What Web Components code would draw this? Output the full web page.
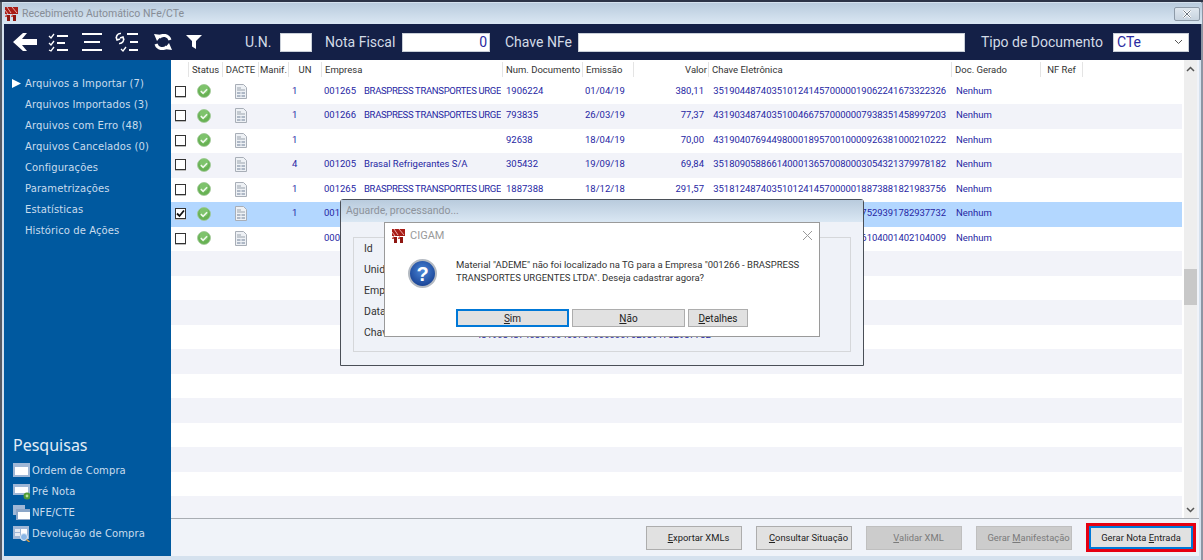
<!DOCTYPE html>
<html lang="pt-BR">
<head>
<meta charset="utf-8">
<title>Recebimento Automático NFe/CTe</title>
<style>
  html, body { margin: 0; height: 100%; overflow: hidden; background: #dfe7f0; }
  body { font-family: Roboto, "Liberation Sans", sans-serif; }
</style>
</head>
<body>
<app-window>
  <title-bar slot="title">Recebimento Automático NFe/CTe</title-bar>
  <tool-bar slot="tools"></tool-bar>
  <side-nav slot="side"></side-nav>
  <doc-grid slot="main"></doc-grid>
  <action-bar slot="actions"></action-bar>
  <wait-dialog slot="over"></wait-dialog>
  <message-box slot="over"></message-box>
</app-window>

<script>
const logo = `<svg width="13" height="14" viewBox="0 0 13 14" style="flex:none">
  <path fill="#a81c16" d="M0 0h13v7H0z"/>
  <path stroke="#e9aca8" stroke-width="1" d="M2 0l4 6M7 0l5 6M0 3l3 4"/>
  <path fill="#8f1712" d="M2 8h3v6H2zM8 8h3v6H8z"/>
  <path fill="#c9524c" d="M0 9l2-2v3H0zM6 9l2-2v3H6z"/>
</svg>`

class AppWindow extends HTMLElement {
  connectedCallback() {
    this.attachShadow({ mode: "open" }).innerHTML = `
      <style>
        :host { display: block; position: relative; width: 1203px; height: 560px; box-sizing: border-box;
          padding: 1px 4px 4px 4px; border-top: 2px solid #2c3346;
          background: #d5e1ee; box-shadow: inset 2px 0 0 #555b66, inset -2px 0 0 #8d95a3; }
        .frame { display: flex; flex-direction: column; height: 100%; }
        .body { flex: 1; display: flex; min-height: 0; background: #f0f3f9; }
        .main { flex: 1; min-width: 0; display: flex; flex-direction: column; }
        ::slotted([slot="main"]) { flex: 1; min-height: 0; }
      </style>
      <div class="frame">
        <slot name="title"></slot>
        <slot name="tools"></slot>
        <div class="body">
          <slot name="side"></slot>
          <div class="main"><slot name="main"></slot><slot name="actions"></slot></div>
        </div>
      </div>
      <slot name="over"></slot>`
  }
}

class TitleBar extends HTMLElement {
  connectedCallback() {
    this.attachShadow({ mode: "open" }).innerHTML = `
      <style>
        :host { display: flex; align-items: center; height: 21px; gap: 4px; padding: 0 2px 0 2px; margin: 0 -3px 0 -1px;
          background: linear-gradient(#b9cbdd, #dae7f3); color: #878d96; font-size: 10.500px; }
        .title { flex: 1; }
        .close { width: 26px; height: 14px; box-sizing: border-box; border: 1px solid #8d9aa8; border-radius: 2px;
          background: linear-gradient(#dfe7ef, #c7d3df); display: flex; align-items: center; justify-content: center; }
      </style>
      ${logo}
      <span class="title"><slot></slot></span>
      <span class="close"><svg width="10" height="8" viewBox="0 0 10 8"><path d="M1.500 .5l7 7M8.500 .5l-7 7" stroke="#fff" stroke-width="2.400"/><path d="M1.500 .5l7 7M8.500 .5l-7 7" stroke="#6d7782" stroke-width="1"/></svg></span>`
  }
}

class ToolBar extends HTMLElement {
  connectedCallback() {
    this.attachShadow({ mode: "open" }).innerHTML = `
      <style>
        :host { display: flex; align-items: center; height: 36px; background: #142047; color: #d3dbe6;
          font-size: 14px; margin: 0 -2px 0 0; }
        svg { display: block; flex: none; }
        label { flex: none; white-space: nowrap; }
        .field { flex: none; box-sizing: border-box; height: 19px; background: #fff; color: #2a2aa0; border: 1px solid #c9cfd8;
          display: flex; align-items: center; justify-content: flex-end; padding: 0 2px; font-size: 14px; }
        .select { justify-content: space-between; padding: 0 5px 0 3px; }
      </style>
      <svg style="margin-left:9px" width="24" height="20" viewBox="0 0 24 20"><path fill="#fff" d="M0 10l10-9h4l-5 6h15v6H9l5 6h-4z"/></svg>
      <svg style="margin-left:11px" width="20" height="20" viewBox="0 0 20 20" fill="none" stroke="#fff"><path stroke-width="1.300" d="M1 4l2 2 3-4M1 11l2 2 3-4M1 18l2 1 3-4"/><path stroke-width="1.800" d="M9 4h11M9 11h8M9 18h11"/></svg>
      <svg style="margin-left:14px" width="20" height="20" viewBox="0 0 20 20" stroke="#fff" stroke-width="2"><path d="M0 2h20M2 10h16M0 18h20"/></svg>
      <svg style="margin-left:13px" width="23" height="20" viewBox="0 0 23 20" fill="none" stroke="#fff"><path stroke-width="1.500" d="M6 1.500a4 4 0 0 0-4 6M4 11.500a4 4 0 0 0 4-6M1 5l1 3 3-1M9 8L8 5 5 6"/><path stroke-width="1.300" d="M6 17l2 2 3-4"/><path stroke-width="1.800" d="M12 2h11M15 10h8M14 18h9"/></svg>
      <svg style="margin-left:16px" width="18" height="16" viewBox="0 0 18 16" fill="none"><path stroke="#fff" stroke-width="3" d="M16 6A6.500 6.500 0 0 0 5 3.500M2 10a6.500 6.500 0 0 0 11 2.500"/><path fill="#fff" d="M0 0l8 1-5 6zM18 16l-8-1 5-6z"/></svg>
      <svg style="margin-left:14px" width="16" height="14" viewBox="0 0 16 14"><path fill="#fff" d="M0 0h16L10 6v8l-4-2.500V6z"/></svg>
      <label style="margin-left:43px;width:25px">U.N.</label>
      <span class="field" style="margin-left:10px;width:32px"></span>
      <label style="margin-left:13px;width:71px">Nota Fiscal</label>
      <span class="field" style="margin-left:6px;width:88px">0</span>
      <label style="margin-left:15px;width:66px">Chave NFe</label>
      <span class="field" style="margin-left:7px;width:387px"></span>
      <label style="margin-left:16px;width:121px">Tipo de Documento</label>
      <span class="field select" style="margin-left:11px;width:76px">CTe<svg width="9" height="6" viewBox="0 0 9 6" fill="none" stroke="#555"><path d="M1 1l3.500 3.500L8 1"/></svg></span>`
  }
}

class NavLink extends HTMLElement {
  connectedCallback() {
    this.attachShadow({ mode: "open" }).innerHTML = `
      <style>
        :host { display: flex; align-items: center; height: 21px; padding-left: 8px; color: #c9dced;
          font-family: "DejaVu Sans", sans-serif; font-size: 10px; letter-spacing: .1px; }
        .mark { width: 13px; flex: none; }
        .mark svg { display: block; }
      </style>
      <span class="mark">${this.hasAttribute("active") ? '<svg width="9" height="9" viewBox="0 0 9 9"><path fill="#fff" d="M0 0l9 4.500L0 9z"/></svg>' : ""}</span>
      <slot></slot>`
  }
}

const searchIcons = {
  order: `<path fill="#9fb7d6" d="M0 0h17v14H0z"/><path fill="#fff" d="M2 4h13v8H2z"/>`,
  pre: `<path fill="#9fb7d6" d="M0 0h17v11H0z"/><path fill="#fff" d="M2 3h13v6H2z"/><circle cx="14" cy="12" r="3.500" fill="#4f9a35"/><circle cx="14" cy="12" r="1.400" fill="#b9e39a"/>`,
  nfe: `<path fill="#9fb7d6" d="M0 0h12v10H0z"/><path fill="#8ba6c8" d="M3 4h14v11H3z"/><path fill="#fff" d="M5 7h12v7H5z"/>`,
  dev: `<path fill="#9fb7d6" d="M0 0h16v13H0z"/><path fill="#e6ebf2" d="M2 3h5v3H2zM2 7h5v3H2z"/><path fill="#fff" d="M8 3h6v8H8z"/><circle cx="11" cy="11" r="3.500" fill="#8bb7e6" stroke="#dfe9f5"/><path stroke="#d89a3c" stroke-width="1.500" d="M13.500 13.500l3 2.500"/>`
}

class SearchLink extends HTMLElement {
  connectedCallback() {
    this.attachShadow({ mode: "open" }).innerHTML = `
      <style>
        :host { display: flex; align-items: center; gap: 2px; height: 21px; padding-left: 9px; color: #c9dced;
          font-family: "DejaVu Sans", sans-serif; font-size: 10px; letter-spacing: .1px; }
        svg { flex: none; }
      </style>
      <svg width="17" height="16" viewBox="0 0 17 16">${searchIcons[this.getAttribute("icon")]}</svg>
      <slot></slot>`
  }
}

class SideNav extends HTMLElement {
  connectedCallback() {
    const links = ["Arquivos a Importar (7)", "Arquivos Importados (3)", "Arquivos com Erro (48)", "Arquivos Cancelados (0)",
      "Configurações", "Parametrizações", "Estatísticas", "Histórico de Ações"]
    const searches = [["order", "Ordem de Compra"], ["pre", "Pré Nota"], ["nfe", "NFE/CTE"], ["dev", "Devolução de Compra"]]
    this.attachShadow({ mode: "open" }).innerHTML = `
      <style>
        :host { display: flex; flex-direction: column; flex: none; width: 167px; background: #00599f; box-sizing: border-box; padding: 13px 0 12px; }
        .links { flex: 1; }
        h2 { margin: 0 0 4px 9px; font: 400 16px "Noto Sans", sans-serif; color: #e4edf6; }
      </style>
      <div class="links">${links.map((l, i) => `<nav-link ${i == 0 ? "active" : ""}>${l}</nav-link>`).join("")}</div>
      <h2>Pesquisas</h2>
      ${searches.map(([icon, label]) => `<search-link icon="${icon}">${label}</search-link>`).join("")}`
  }
}

const columns = "18px 34px 36px 30px 33px 181px 80px 51px 75px 243px 89px 42px 98px"

const statusIcon = `<svg width="14" height="14" viewBox="0 0 14 14"><circle cx="7" cy="7" r="6.500" fill="#68b254" stroke="#a3c99b" stroke-width=".8"/><circle cx="7" cy="5" r="4.500" fill="#94d383" opacity=".5"/><path d="M3.800 7.200l2.300 2.200 4-4.200" fill="none" stroke="#eef8ea" stroke-width="1.600"/></svg>`
const docIcon = `<svg width="12" height="15" viewBox="0 0 12 15"><path fill="#eef1f5" stroke="#a8aeb7" d="M.5.5h8l3 3v11H.5z"/><path stroke="#9aa3ad" d="M2 4h4M2 6h8"/><path fill="#aeb8c6" d="M2 8h8v5H2z"/><path stroke="#eef1f5" d="M2 10.500h8M6 8v5"/></svg>`

class CheckBox extends HTMLElement {
  connectedCallback() {
    this.attachShadow({ mode: "open" }).innerHTML = `
      <style>
        :host { display: block; width: 11px; height: 11px; box-sizing: border-box; border: 1px solid #333; background: #fff; box-shadow: 0 1px 0 #bbb; }
        svg { display: block; }
      </style>
      ${this.hasAttribute("checked") ? '<svg width="9" height="9" viewBox="0 0 9 9"><path d="M1 4.500l2.500 2.500L8 1.500" fill="none" stroke="#111" stroke-width="1.800"/></svg>' : ""}`
  }
}

class GridRow extends HTMLElement {
  connectedCallback() {
    const d = JSON.parse(this.getAttribute("data") || "null")
    const caps = d && d.name && d.name == d.name.toUpperCase()
    const cells = !d ? "" : `
      <span class="c"><check-box ${d.checked ? "checked" : ""}></check-box></span>
      <span class="c st">${statusIcon}</span>
      <span class="c">${docIcon}</span>
      <span></span>
      <span class="un">${d.un || ""}</span>
      <span class="emp"><span class="code">${d.code || ""}</span><span class="name ${caps ? "caps" : ""}">${d.name || ""}</span></span>
      <span class="num">${d.num || ""}</span>
      <span class="dt">${d.date || ""}</span>
      <span class="val">${d.value || ""}</span>
      <span class="key">${d.key || ""}</span>
      <span class="gen">Nenhum</span>`
    this.attachShadow({ mode: "open" }).innerHTML = `
      <style>
        :host { display: grid; grid-template-columns: ${columns}; align-items: center; height: 24.5px; flex: none; box-sizing: border-box;
          padding-bottom: 3px; background: #fff; color: #2626a3; font-size: 9.500px; white-space: nowrap; }
        :host([shade]) { background: #f2f3f9; }
        :host([selected]) { background: #b3d7ff; }
        .c { display: flex; justify-content: center; padding-top: 2px; }
        .c:first-child { justify-content: flex-start; padding: 0 0 0 5px; margin-top: -2px; }
        .st { margin-left: -5px; }
        .un { padding-left: 3px; }
        .emp { display: flex; overflow: hidden; padding-left: 2px; }
        .code { width: 40px; flex: none; }
        .name { overflow: hidden; }
        .caps { letter-spacing: -.32px; }
        .num { padding-left: 3px; }
        .dt { padding-left: 2px; }
        .val { text-align: right; padding-right: 5px; }
        .key { text-align: right; padding-right: 6px; letter-spacing: -.05px; }
        .gen { padding-left: 4px; }
      </style>${cells}`
  }
}

class DocGrid extends HTMLElement {
  connectedCallback() {
    const heads = [["", ""], ["Status", "c"], ["DACTE", "c"], ["Manif.", "c"], ["UN", "c"], ["Empresa", ""], ["Num. Documento", ""], ["Emissão", ""], ["Valor", "r"], ["Chave Eletrônica", ""], ["Doc. Gerado", ""], ["NF Ref", "c"]]
    const cut = "BRASPRESS TRANSPORTES URGE"
    const rows = [
      { code: "001265", un: 1, name: cut, num: "1906224", date: "01/04/19", value: "380,11", key: "35190448740351012414570000019062241673322326" },
      { code: "001266", un: 1, name: cut, num: "793835", date: "26/03/19", value: "77,37", key: "43190348740351004667570000007938351458997203" },
      { un: 1, num: "92638", date: "18/04/19", value: "70,00", key: "43190407694498000189570010000926381000210222" },
      { code: "001205", un: 4, name: "Brasal Refrigerantes S/A", num: "305432", date: "19/09/18", value: "69,84", key: "35180905886614000136570080003054321379978182" },
      { code: "001265", un: 1, name: cut, num: "1887388", date: "18/12/18", value: "291,57", key: "35181248740351012414570000018873881821983756" },
      { code: "001", un: 1, checked: true, key: "7529391782937732" },
      { code: "000", key: "6104001402104009" }
    ]
    let rowsHtml = ""
    for (let i = 0; i < 18; i++) {
      const flags = (i == 5 ? "selected " : "") + (i % 2 ? "shade" : "")
      rowsHtml += `<grid-row ${flags} ${rows[i] ? `data='${JSON.stringify(rows[i])}'` : ""}></grid-row>`
    }
    this.attachShadow({ mode: "open" }).innerHTML = `
      <style>
        :host { display: flex; background: #fff; overflow: hidden; }
        .table { flex: 1; min-width: 0; display: flex; flex-direction: column; padding-right: 2px; }
        .head { display: grid; grid-template-columns: ${columns}; height: 19.500px; flex: none; align-items: center;
          color: #333; font-size: 9.500px; white-space: nowrap; }
        .head span { height: 15px; line-height: 15px; padding-left: 3px; box-sizing: border-box; border-right: 1px solid #e4e4e4; overflow: hidden; }
        .head .c { text-align: center; padding: 0; }
        .head .r { text-align: right; padding-right: 1px; }
        .bar { width: 13px; flex: none; background: #eeeeee; display: flex; flex-direction: column; align-items: center; padding: 6px 0 5px; box-sizing: border-box; }
        .bar svg { display: block; }
        .track { flex: 1; width: 100%; padding-top: 197px; box-sizing: border-box; }
        .thumb { height: 36px; background: #c8c8c8; }
        .edge { width: 2px; flex: none; background: #f0f3f9; }
      </style>
      <div class="table">
        <div class="head">${heads.map(([t, k]) => `<span class="${k}">${t}</span>`).join("")}</div>
        ${rowsHtml}
      </div>
      <div class="bar">
        <svg width="9" height="6" viewBox="0 0 9 6" fill="none" stroke="#555" stroke-width="1.500"><path d="M1 5l3.500-3.500L8 5"/></svg>
        <div class="track"><div class="thumb"></div></div>
        <svg width="9" height="6" viewBox="0 0 9 6" fill="none" stroke="#555" stroke-width="1.500"><path d="M1 1l3.500 3.500L8 1"/></svg>
      </div>
      <div class="edge"></div>`
  }
}

class UiButton extends HTMLElement {
  connectedCallback() {
    this.attachShadow({ mode: "open" }).innerHTML = `
      <style>
        :host { display: flex; align-items: center; justify-content: center; box-sizing: border-box; flex: none; height: 24px; width: 96px;
          background: #e1e1e1; border: 1px solid #adadad; color: #222; font-size: inherit; white-space: nowrap; }
        :host([disabled]) { background: #cccccc; border-color: #bfbfbf; color: #7a7a7a; }
        :host([focused]) { border: 2px solid #0078d7; }
      </style><span><slot></slot></span>`
  }
}

class ActionBar extends HTMLElement {
  connectedCallback() {
    this.attachShadow({ mode: "open" }).innerHTML = `
      <style>
        :host { display: flex; align-items: center; justify-content: flex-end; flex: none; height: 38px; gap: 14px; box-sizing: border-box;
          border-top: 1px solid #a9adb3; background: #f0f3f9; padding: 0 3px 0 0; font-size: 9.400px; }
        .mark { border: 3px solid #e60012; flex: none; }
        u { text-decoration: underline; }
        .pad { padding-left: 9px; }
        .last { width: 104px; height: 23px; }
      </style>
      <ui-button class="pad"><span><u>E</u>xportar XMLs</span></ui-button>
      <ui-button class="pad"><span><u>C</u>onsultar Situação</span></ui-button>
      <ui-button class="pad" disabled><span><u>V</u>alidar XML</span></ui-button>
      <ui-button class="pad" disabled><span>Gerar <u>M</u>anifestação</span></ui-button>
      <div class="mark"><ui-button focused class="last"><span>Gerar Nota <u>E</u>ntrada</span></ui-button></div>`
  }
}

class WaitDialog extends HTMLElement {
  connectedCallback() {
    const labels = ["Id", "Unidade", "Empresa", "Data", "Chave"]
    this.attachShadow({ mode: "open" }).innerHTML = `
      <style>
        :host { position: absolute; left: 340px; top: 197px; width: 524px; height: 167px; box-sizing: border-box; display: flex; flex-direction: column;
          border: 1px solid #4a4f57; border-radius: 3px 3px 0 0; background: #eff2f8; font-size: 10.500px; color: #333; }
        .cap { height: 22px; flex: none; background: linear-gradient(#b9cbdd, #dae7f3); color: #8d939b; font-size: 10.500px; padding: 0 5px; line-height: 22px; }
        .box { position: relative; flex: 1; margin: 15px 12px 13px 12px; border: 1px solid #d5d7da; padding: 0 10px; }
        .row { height: 21px; line-height: 21px; }
        .key { position: absolute; left: 122px; top: 91px; color: #2626a3; font-size: 9.500px; line-height: 12px; }
      </style>
      <div class="cap">Aguarde, processando...</div>
      <div class="box">
        ${labels.map(l => `<div class="row">${l}</div>`).join("")}
        <span class="key">43190348740351004667570000007529391782937732</span>
      </div>`
  }
}

class MessageBox extends HTMLElement {
  connectedCallback() {
    this.attachShadow({ mode: "open" }).innerHTML = `
      <style>
        :host { position: absolute; left: 384px; top: 220px; width: 436px; height: 115px; box-sizing: border-box; display: flex; flex-direction: column;
          background: #fff; border: 1px solid #9a9a9a; color: #333; font-size: 9.500px; }
        .cap { display: flex; align-items: center; gap: 5px; height: 25px; flex: none; padding: 0 6px 0 7px; color: #9a9a9a; font-size: 11px; }
        .cap span { flex: 1; }
        .msg { display: flex; flex: 1; padding: 6px 0 0 23px; gap: 19px; line-height: 13px; }
        .msg svg { flex: none; margin-top: 5px; }
        .msg p { margin: 4px 0 0 0; white-space: nowrap; }
        .btns { display: flex; gap: 3px; padding: 0 0 9px 71px; flex: none; font-size: 10px; }
        .btns ui-button { height: 18px; width: 113px; }
        .btns .small { width: 60px; }
        u { text-decoration: underline; }
        .q { font: 700 20px "Liberation Sans", sans-serif; fill: #fff; }
      </style>
      <div class="cap">${logo}<span>CIGAM</span>
        <svg width="11" height="11" viewBox="0 0 11 11"><path d="M1 1l9 9M10 1l-9 9" stroke="#9a9a9a" fill="none"/></svg></div>
      <div class="msg">
        <svg width="29" height="29" viewBox="0 0 29 29">
          <defs><radialGradient id="q" cx=".5" cy=".4" r=".65"><stop offset="0" stop-color="#4a86d8"/><stop offset="1" stop-color="#133a8c"/></radialGradient></defs>
          <circle cx="14.500" cy="14.500" r="13.500" fill="url(#q)" stroke="#b4bac2" stroke-width="2"/>
          <text class="q" x="14.500" y="21.500" text-anchor="middle">?</text>
        </svg>
        <p>Material "ADEME" não foi localizado na TG para a Empresa "001266 - BRASPRESS<br>TRANSPORTES URGENTES LTDA". Deseja cadastrar agora?</p>
      </div>
      <div class="btns">
        <ui-button focused><span><u>S</u>im</span></ui-button>
        <ui-button><span><u>N</u>ão</span></ui-button>
        <ui-button class="small"><span><u>D</u>etalhes</span></ui-button>
      </div>`
  }
}

customElements.define("app-window", AppWindow)
customElements.define("title-bar", TitleBar)
customElements.define("tool-bar", ToolBar)
customElements.define("nav-link", NavLink)
customElements.define("search-link", SearchLink)
customElements.define("side-nav", SideNav)
customElements.define("check-box", CheckBox)
customElements.define("grid-row", GridRow)
customElements.define("doc-grid", DocGrid)
customElements.define("ui-button", UiButton)
customElements.define("action-bar", ActionBar)
customElements.define("wait-dialog", WaitDialog)
customElements.define("message-box", MessageBox)
</script>
</body>
</html>
